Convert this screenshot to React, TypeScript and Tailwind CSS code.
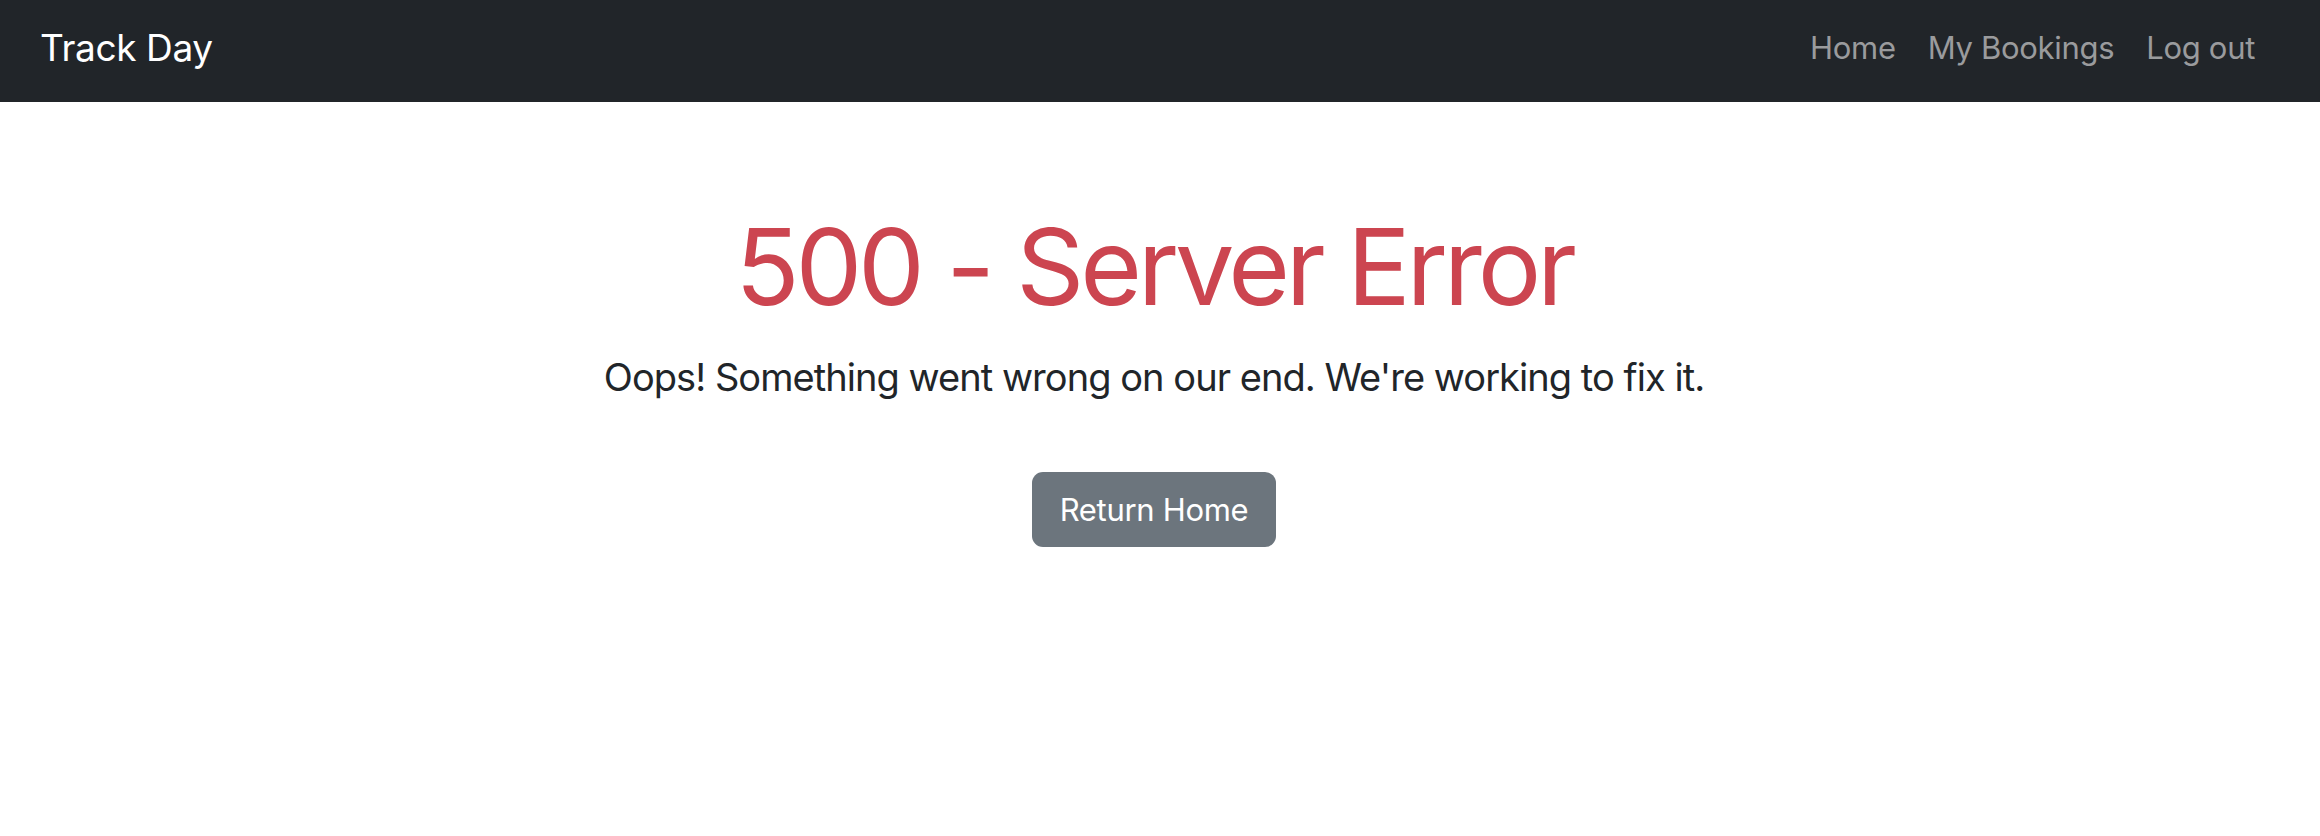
import React from "react";

export default function App() {
  return (
    <div className="min-h-[836px] bg-white" style={{ fontFamily: "Inter, 'Noto Sans', sans-serif" }}>
      <nav className="flex h-[102px] items-center justify-between bg-[#212529] pb-[8px] pl-[40px] pr-[65px]">
        <a className="text-[37px] leading-none text-white tracking-[-0.01em]">Track Day</a>
        <div className="flex items-center gap-[32px] text-[31px] leading-none text-[#9a9b9d] tracking-[-0.01em]">
          <a>Home</a>
          <a>My Bookings</a>
          <a>Log out</a>
        </div>
      </nav>
      <main className="flex flex-col items-center pr-[12px] pt-[101px] text-center">
        <h1 className="text-[106px] leading-[1.2] tracking-[-0.04em] text-[#cc4550]">500 - Server Error</h1>
        <p className="mt-[19px] text-[38px] leading-[1.5] tracking-[-0.025em] text-[#212529]">
          Oops! Something went wrong on our end. We're working to fix it.
        </p>
        <button className="mt-[66px] flex h-[75px] w-[244px] items-center justify-center rounded-[11px] bg-[#6c757d] text-[31px] leading-none text-white tracking-[-0.01em]">
          Return Home
        </button>
      </main>
    </div>
  );
}
